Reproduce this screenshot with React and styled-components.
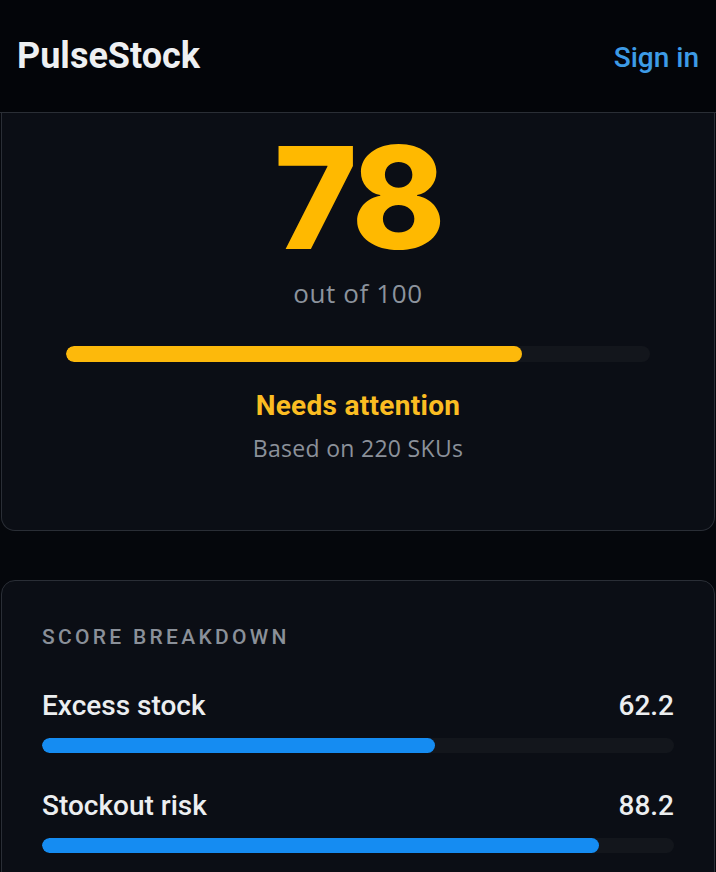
import React from 'react';
import styled, { createGlobalStyle } from 'styled-components';

const GlobalStyle = createGlobalStyle`
    html, body {
        margin: 0;
        padding: 0;
        background: #05070c;
    }
    body {
        font-family: "Roboto", "Noto Sans", sans-serif;
        color: #e8eaed;
    }
`;

const breakdown = [
    { label: 'Excess stock', value: 62.2 },
    { label: 'Stockout risk', value: 88.2 },
];

const App = () => {
    const score = 78;

    return (
        <>
            <GlobalStyle />
            <Page>
                <Header>
                    <Brand>PulseStock</Brand>
                    <SignIn href="#">Sign in</SignIn>
                </Header>
                <Main>
                    <ScoreCard>
                        <ScoreValue>{score}</ScoreValue>
                        <ScoreMax>out of 100</ScoreMax>
                        <Track $wide>
                            <Fill $color="#fdb90b" style={{ width: `${score}%` }} />
                        </Track>
                        <Status>Needs attention</Status>
                        <Basis>Based on 220 SKUs</Basis>
                    </ScoreCard>

                    <BreakdownCard>
                        <SectionTitle>Score breakdown</SectionTitle>
                        {breakdown.map(item => (
                            <Metric key={item.label}>
                                <MetricHead>
                                    <span>{item.label}</span>
                                    <span>{item.value.toFixed(1)}</span>
                                </MetricHead>
                                <Track>
                                    <Fill $color="#158cf2" style={{ width: `${item.value}%` }} />
                                </Track>
                            </Metric>
                        ))}
                    </BreakdownCard>
                </Main>
            </Page>
        </>
    );
};

export default App;

const Page = styled.div`
    min-height: 872px;
    overflow: hidden;
`;

const Header = styled.header`
    height: 112px;
    display: flex;
    align-items: center;
    justify-content: space-between;
    padding: 0 17px;
    background: #030509;
    border-bottom: 1px solid #2a2e35;
`;

const Brand = styled.div`
    font-size: 36px;
    font-weight: 700;
    color: #eef0f2;
`;

const SignIn = styled.a`
    font-size: 28px;
    font-weight: 500;
    color: #3d9be6;
    text-decoration: none;
    padding-top: 2px;
`;

const Main = styled.main`
    display: flex;
    flex-direction: column;
    gap: 49px;
    padding: 0 1px;
`;

const Card = styled.section`
    background: #0b0e15;
    border: 1px solid #2a2e36;
    border-radius: 14px;
`;

const ScoreCard = styled(Card)`
    border-top: none;
    border-radius: 0 0 14px 14px;
    padding: 13px 64px 70px;
    display: flex;
    flex-direction: column;
    align-items: center;
`;

const ScoreValue = styled.div`
    font-family: "Inter", sans-serif;
    font-size: 142px;
    font-weight: 800;
    line-height: 1;
    color: #ffb900;
    letter-spacing: -4px;
`;

const ScoreMax = styled.div`
    margin-top: 12px;
    font-family: "Open Sans", sans-serif;
    font-size: 26px;
    line-height: 1;
    letter-spacing: 0.6px;
    color: #8c939d;
`;

const Track = styled.div`
    align-self: stretch;
    height: ${p => (p.$wide ? 16 : 15)}px;
    margin-top: ${p => (p.$wide ? 40 : 18)}px;
    background: #13161c;
    border-radius: 8px;
    overflow: hidden;
`;

const Fill = styled.div`
    height: 100%;
    background: ${p => p.$color};
    border-radius: 8px;
`;

const Status = styled.div`
    margin-top: 30px;
    font-size: 28px;
    font-weight: 700;
    line-height: 1;
    letter-spacing: 0.3px;
    color: #fbbd22;
`;

const Basis = styled.div`
    margin-top: 17px;
    font-family: "Open Sans", sans-serif;
    font-size: 23px;
    line-height: 1;
    letter-spacing: 0.3px;
    color: #8b919a;
`;

const BreakdownCard = styled(Card)`
    padding: 46px 40px 40px;
    display: flex;
    flex-direction: column;
    gap: 39px;
`;

const SectionTitle = styled.h2`
    margin: 0 0 5px;
    font-size: 21px;
    font-weight: 500;
    line-height: 1;
    text-transform: uppercase;
    letter-spacing: 3.3px;
    color: #8a9099;
`;

const Metric = styled.div`
    display: flex;
    flex-direction: column;
`;

const MetricHead = styled.div`
    display: flex;
    justify-content: space-between;
    align-items: baseline;
    font-size: 28px;
    font-weight: 500;
    line-height: 1;
    color: #eceef0;
`;
